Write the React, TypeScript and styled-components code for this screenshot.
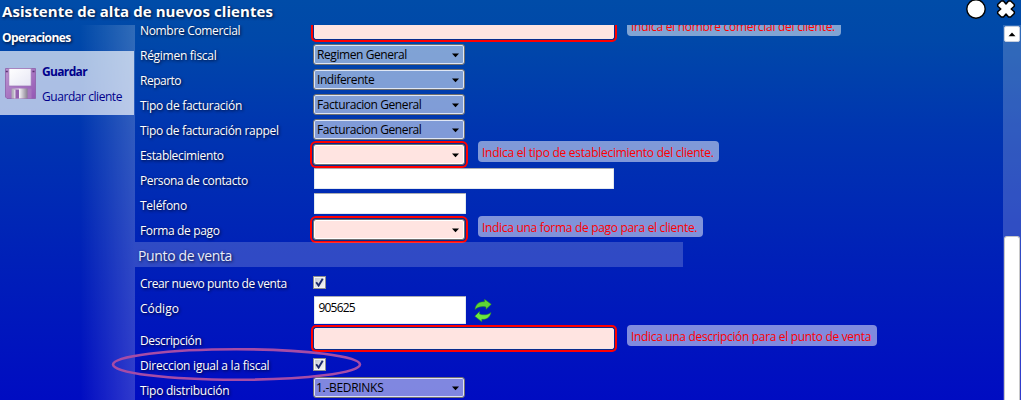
import React from "react";
import styled, { createGlobalStyle, css } from "styled-components";

const GlobalStyle = createGlobalStyle`
  * { box-sizing: border-box; }
  body {
    margin: 0;
    overflow: hidden;
    font-family: "Open Sans", "Noto Sans", sans-serif;
    font-size: 12px;
    line-height: 16px;
  }
`;

const Window = styled.div`
  position: relative;
  display: flex;
  flex-direction: column;
  width: 1021px;
  height: 400px;
  overflow: hidden;
  color: #fff;
  background: linear-gradient(#004ca8 0, #0048a9 40px, #0035b0 130px, #0020b8 260px, #000cc2 400px);
`;

const TitleBar = styled.header`
  display: flex;
  justify-content: space-between;
  height: 25px;
  flex: none;
  padding: 0 5px 0 2px;
`;

const Title = styled.h1`
  margin: 0;
  font-size: 15px;
  line-height: 22px;
  font-weight: 700;
  letter-spacing: 0.08px;
  white-space: nowrap;
  text-shadow: 1px 1px 3px rgba(0, 0, 20, 0.9);
`;

const WindowButtons = styled.div`
  display: flex;
  gap: 9px;
`;

const Body = styled.div`
  display: flex;
  flex: 1;
  min-height: 0;
`;

const Sidebar = styled.nav`
  width: 135px;
  flex: none;
  background: linear-gradient(90deg, rgba(255, 255, 255, 0) 80px, rgba(255, 255, 255, 0.19) 135px);
`;

const SidebarTitle = styled.div`
  height: 26px;
  padding-left: 2px;
  font-weight: 700;
  line-height: 26px;
  letter-spacing: -0.6px;
  text-shadow: 1px 1px 3px rgba(0, 0, 20, 0.9);
`;

const Operation = styled.div`
  display: flex;
  align-items: center;
  gap: 6px;
  width: 134px;
  height: 64px;
  padding-left: 4px;
  color: #00008b;
  background: rgba(255, 255, 255, 0.67);
`;

const OperationText = styled.div`
  display: flex;
  flex-direction: column;
  gap: 9px;
  padding-top: 3px;
  white-space: nowrap;
  letter-spacing: -0.44px;
`;

const OperationName = styled.b`
  letter-spacing: -0.65px;
`;

const Content = styled.main`
  flex: 1;
  min-width: 0;
  overflow: hidden;
`;

const Form = styled.div`
  display: flex;
  flex-direction: column;
  margin-top: -8px;
`;

const Row = styled.div<{ $h?: number; $pt?: number }>`
  display: flex;
  align-items: flex-start;
  flex: none;
  height: ${(p) => p.$h ?? 25}px;
  padding-top: ${(p) => p.$pt ?? 0}px;
`;

const Label = styled.label<{ $ls?: number }>`
  width: 178px;
  flex: none;
  padding: 6px 0 0 5px;
  white-space: nowrap;
  letter-spacing: ${(p) => p.$ls ?? -0.3}px;
  text-shadow: 1px 1px 3px rgba(0, 0, 20, 0.9);
`;

const TextBox = styled.div<{ $w: number; $h?: number; $invalid?: boolean }>`
  width: ${(p) => p.$w}px;
  height: ${(p) => p.$h ?? 21}px;
  margin: 1px 0 0 1px;
  padding: 3px 0 0 3.5px;
  border: 1px solid #e3e9ef;
  border-top-color: #abadb3;
  border-radius: 1px;
  color: #000;
  background: #fff;
  letter-spacing: -0.8px;
  ${(p) => p.$invalid && css`
    border-color: #f3e6ea;
    border-radius: 2px;
    background: #ffe4e1;
    box-shadow: 0 0 0 1px #0a2a8c, 0 0 0 3px #f00;
  `}
`;

const Combo = styled.div<{ $top?: number; $pl?: number; $ls?: number; $invalid?: boolean }>`
  display: flex;
  justify-content: space-between;
  align-items: center;
  width: 152px;
  height: 21px;
  margin-top: ${(p) => p.$top ?? 2}px;
  padding: 1px 4px 0 ${(p) => p.$pl ?? 3}px;
  border: 1px solid #707070;
  border-radius: 3px;
  color: #000;
  background: rgba(255, 255, 255, 0.5);
  box-shadow: inset 0 0 0 1px rgba(255, 255, 255, 0.75);
  white-space: nowrap;
  letter-spacing: ${(p) => p.$ls ?? -0.42}px;
  ${(p) => p.$invalid && css`
    background: #ffe4e1;
    box-shadow: inset 0 0 0 1px #fff, 0 0 0 1px #0a2a8c, 0 0 0 3px #f00;
  `}
`;

const Hint = styled.div<{ $w: number; $ls: number; $top?: number }>`
  width: ${(p) => p.$w}px;
  height: 21px;
  margin: ${(p) => p.$top ?? -1}px 0 0 13px;
  padding: 4px 0 0 4px;
  border-radius: 4px;
  color: #f00;
  background: rgba(255, 255, 255, 0.5);
  white-space: nowrap;
  letter-spacing: ${(p) => p.$ls}px;
`;

const Section = styled.div`
  width: 548px;
  height: 25px;
  flex: none;
  padding-left: 3px;
  font-size: 14px;
  line-height: 27px;
  letter-spacing: -0.35px;
  color: #e8edfa;
  background: rgba(255, 255, 255, 0.19);
  text-shadow: 1px 1px 3px rgba(0, 0, 20, 0.8);
`;

const CheckFrame = styled.span`
  display: flex;
  width: 13px;
  height: 13px;
  margin-top: 6px;
  padding: 1px;
  border: 1px solid #8e8f8f;
  background: linear-gradient(135deg, #c4cad4, #f6f6f6) content-box, #f4f4f4;
`;

const Track = styled.div`
  width: 18px;
  flex: none;
  display: flex;
  flex-direction: column;
  justify-content: space-between;
  padding: 1px 1px 0;
  background: rgba(255, 255, 255, 0.19);
`;

const ScrollButton = styled.div`
  display: flex;
  align-items: center;
  justify-content: center;
  height: 16px;
  border: 1px solid #c5cfdf;
  border-radius: 2px;
  background: #fff;
`;

const Thumb = styled.div`
  height: 164px;
  border: 1px solid #c8c8c8;
  border-bottom: 0;
  border-radius: 3px 3px 0 0;
  background: #fff;
`;

const Highlight = styled.svg`
  position: absolute;
  left: 110px;
  top: 346px;
`;

const Refresh = styled.svg`
  margin: 4px 0 0 8px;
`;

const Arrow = () => (
  <svg width="9" height="5" viewBox="0 0 9 5"><path d="M1 .5h7L4.5 4.3z" fill="#000" /></svg>
);

const Check = () => (
  <CheckFrame>
    <svg width="9" height="9" viewBox="0 0 9 9">
      <path d="M1.2 4.3 3.6 7.6 7.7.8" fill="none" stroke="#1d2a6b" strokeWidth="1.9" />
    </svg>
  </CheckFrame>
);

const Floppy = () => (
  <svg width="32" height="33" viewBox="0 0 32 33">
    <defs>
      <linearGradient id="shell" x1="0" y1="0" x2="1" y2="1">
        <stop offset="0" stopColor="#bd94d0" /><stop offset="1" stopColor="#9458b4" />
      </linearGradient>
      <linearGradient id="paper" x1="0" y1="0" x2="1" y2="1">
        <stop offset="0" stopColor="#fff" /><stop offset="1" stopColor="#e6e6f4" />
      </linearGradient>
      <linearGradient id="metal" x1="0" y1="0" x2="1" y2="0">
        <stop offset="0" stopColor="#aaa6b4" /><stop offset=".5" stopColor="#f2f0f4" /><stop offset="1" stopColor="#87808f" />
      </linearGradient>
    </defs>
    <path d="M1.5 1.5h30v30H3l-1.500-1.500z" fill="url(#shell)" stroke="#8d5fa8" strokeWidth=".8" />
    <path d="M4.800 1.500h22.400v17.500H4.800z" fill="url(#paper)" stroke="#9a70b4" strokeWidth=".7" />
    <path d="M1.800 4.500h2M28.500 4.500h2" stroke="#5a3570" strokeWidth="1.500" />
    <path d="M7.500 21.500h20v10h-20z" fill="#a675be" />
    <path d="M7.500 21.500h16v10h-16z" fill="url(#metal)" />
    <path d="M10 22.500h5v9h-5z" fill="#9460ae" />
    <path d="M10 22.500h1.500v9H10z" fill="#d9d4e0" />
  </svg>
);

const selects = [
  { label: "Régimen fiscal", value: "Regimen General", ls: -0.27 },
  { label: "Reparto", value: "Indiferente", ls: -0.5 },
  { label: "Tipo de facturación", value: "Facturacion General", ls: -0.29 },
  { label: "Tipo de facturación rappel", value: "Facturacion General", ls: -0.31 },
];

export default function App() {
  return (
    <Window>
      <GlobalStyle />
      <TitleBar>
        <Title>Asistente de alta de nuevos clientes</Title>
        <WindowButtons>
          <svg width="22" height="20" viewBox="0 0 22 20">
            <circle cx="11" cy="9" r="9.2" fill="#fff" stroke="#000" strokeWidth="1.4" />
          </svg>
          <svg width="20" height="20" viewBox="0 0 20 20">
            <path d="M5.300 1 7.500 1 10 4 12.500 1 14.700 1 18.300 4.500 18.300 6.300 15.200 9 18.300 11.700 18.300 13.500 14.700 17 12.500 17 10 14 7.500 17 5.300 17 1.700 13.500 1.700 11.700 4.800 9 1.700 6.300 1.700 4.500z" fill="#fff" stroke="#000" strokeWidth="1.500" strokeLinejoin="round" />
          </svg>
        </WindowButtons>
      </TitleBar>
      <Body>
        <Sidebar>
          <SidebarTitle>Operaciones</SidebarTitle>
          <Operation>
            <Floppy />
            <OperationText>
              <OperationName>Guardar</OperationName>
              <span>Guardar cliente</span>
            </OperationText>
          </Operation>
        </Sidebar>
        <Content>
          <Form>
            <Row>
              <Label $ls={-0.33}>Nombre Comercial</Label>
              <TextBox $w={300} $invalid />
              <Hint $w={214} $ls={-0.28} $top={-2}>Indica el nombre comercial del cliente.</Hint>
            </Row>
            {selects.map((s) => (
              <Row key={s.label}>
                <Label $ls={s.ls}>{s.label}</Label>
                <Combo>{s.value}<Arrow /></Combo>
              </Row>
            ))}
            <Row>
              <Label $ls={-0.35}>Establecimiento</Label>
              <Combo $invalid><span /><Arrow /></Combo>
              <Hint $w={241} $ls={-0.27}>Indica el tipo de establecimiento del cliente.</Hint>
            </Row>
            <Row><Label $ls={-0.36}>Persona de contacto</Label><TextBox $w={300} /></Row>
            <Row><Label $ls={-0.25}>Teléfono</Label><TextBox $w={152} /></Row>
            <Row>
              <Label $ls={-0.35}>Forma de pago</Label>
              <Combo $invalid><span /><Arrow /></Combo>
              <Hint $w={225} $ls={-0.31}>Indica una forma de pago para el cliente.</Hint>
            </Row>
            <Section>Punto de venta</Section>
            <Row $h={28} $pt={3}><Label $ls={-0.38}>Crear nuevo punto de venta</Label><Check /></Row>
            <Row $h={32}>
              <Label $ls={0}>Código</Label>
              <TextBox $w={152} $h={28}>905625</TextBox>
              <Refresh width="18" height="23" viewBox="0 0 18 23">
                <path d="M1 10.500C1.500 5 5.500 2.300 10.500 2.800V.300L17.300 5.300 12 10.300V8C7.500 7 3.500 8 1 10.500z" fill="#5fd435" stroke="#2b8a1d" strokeWidth=".5" />
                <path d="M17 13.500C16 18.500 12 20.800 7.800 20.300V22.700L.8 17.200 5.500 12.500V15C10 16.500 14 16 17 13.500z" fill="#6be83d" stroke="#2b8a1d" strokeWidth=".5" />
              </Refresh>
            </Row>
            <Row>
              <Label $ls={-0.38}>Descripción</Label>
              <TextBox $w={300} $invalid />
              <Hint $w={250} $ls={-0.33} $top={-2}>Indica una descripción para el punto de venta</Hint>
            </Row>
            <Row><Label $ls={-0.25}>Direccion igual a la fiscal</Label><Check /></Row>
            <Row><Label $ls={-0.26}>Tipo distribución</Label><Combo $top={0} $pl={2} $ls={-0.3}>1.-BEDRINKS<Arrow /></Combo></Row>
          </Form>
        </Content>
        <Track>
          <ScrollButton>
            <svg width="8" height="5" viewBox="0 0 8 5"><path d="M.5 4.200 4 .5l3.500 3.700z" fill="#000" /></svg>
          </ScrollButton>
          <Thumb />
        </Track>
      </Body>
      <Highlight width="254" height="38" viewBox="0 0 254 38">
        <ellipse cx="126.500" cy="18.500" rx="123.500" ry="15.300" fill="none" stroke="#a64ca6" strokeWidth="2.600" />
      </Highlight>
    </Window>
  );
}
